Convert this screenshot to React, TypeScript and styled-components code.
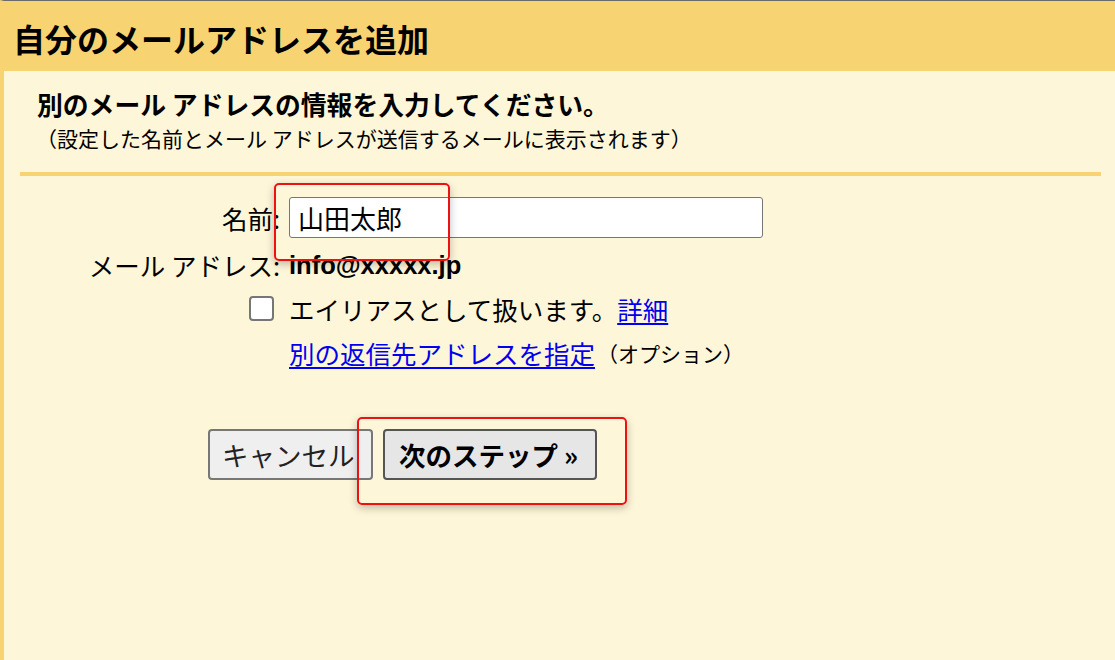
import React from 'react';
import styled, { createGlobalStyle } from 'styled-components';

const JP = `"Noto Sans CJK JP", "Noto Sans", sans-serif`;

const GlobalStyle = createGlobalStyle`
  html, body {
    margin: 0;
    padding: 0;
    background: #fef6d9;
  }
  body {
    font-family: ${JP};
    color: #000;
  }
`;

const Page = styled.div`
  position: relative;
  width: 1115px;
  height: 660px;
  overflow: hidden;
  border-top: 1px solid #6b6b6b;
  box-sizing: border-box;
  background: #fef6d9;
  border-left: 4px solid #f8d372;
`;

const Header = styled.div`
  background: #f8d372;
  height: 70px;
  margin-left: -4px;
  padding: 13px 0 0 13px;
  box-sizing: border-box;
`;

const Title = styled.h1`
  margin: 0;
  font-size: 32px;
  font-weight: 700;
  line-height: 48px;
  white-space: nowrap;
`;

const Intro = styled.div`
  padding: 18px 0 0 33px;
`;

const Lead = styled.div`
  font-size: 25.8px;
  font-weight: 700;
  line-height: 30px;
  white-space: nowrap;
`;

const Note = styled.div`
  font-size: 21px;
  line-height: 26px;
  margin: 6px 0 0 -1px;
  white-space: nowrap;
`;

const Divider = styled.hr`
  margin: 21px 0 0 16px;
  width: 1081px;
  height: 4px;
  border: 0;
  background: #f8d372;
`;

const Form = styled.div`
  display: grid;
  grid-template-columns: 276px 480px;
  column-gap: 9px;
  align-items: center;
  margin-top: 21px;
`;

const Label = styled.div<{ $mt?: number }>`
  text-align: right;
  font-size: 25.5px;
  line-height: 30px;
  white-space: nowrap;
  margin-top: ${p => p.$mt ?? 0}px;
`;

const Field = styled.input`
  box-sizing: border-box;
  width: 474px;
  height: 41px;
  border: 1px solid #767676;
  border-radius: 3px;
  background: #fff;
  font-family: ${JP};
  font-size: 26px;
  padding: 0 8px;
  color: #000;
  outline: none;
`;

const Value = styled.div`
  font-family: "Liberation Sans", Arial, sans-serif;
  font-weight: 700;
  font-size: 25.5px;
  line-height: 30px;
  margin-top: 12px;
`;

const Row = styled.div<{ $mt: number }>`
  grid-column: 2;
  margin-top: ${p => p.$mt}px;
  font-size: 25.5px;
  line-height: 30px;
  display: flex;
  align-items: center;
  position: relative;
  white-space: nowrap;
`;

const Check = styled.span`
  position: absolute;
  left: -40px;
  top: 2px;
  width: 25px;
  height: 25px;
  box-sizing: border-box;
  border: 2px solid #767676;
  border-radius: 4px;
  background: #fff;
`;

const Link = styled.a`
  color: #0000ee;
  text-decoration: underline;
  text-underline-offset: 3px;
  cursor: pointer;
`;

const Small = styled.span`
  font-size: 21px;
  margin-left: 2px;
`;

const Buttons = styled.div`
  display: flex;
  gap: 10px;
  margin: 61px 0 0 204px;
`;

const Button = styled.button<{ $primary?: boolean }>`
  height: 51px;
  box-sizing: border-box;
  border: 2px solid ${p => (p.$primary ? '#555' : '#777')};
  border-radius: 4px;
  background: ${p => (p.$primary ? '#e6e6e6' : '#efefef')};
  font-family: ${JP};
  font-size: 26.5px;
  font-weight: ${p => (p.$primary ? 700 : 400)};
  color: ${p => (p.$primary ? '#000' : '#222')};
  padding: 0 ${p => (p.$primary ? 14 : 12)}px;
  width: ${p => (p.$primary ? 214 : 165)}px;
  text-align: ${p => (p.$primary ? 'left' : 'left')};
  white-space: nowrap;
  overflow: hidden;
`;

const Highlight = styled.div`
  position: absolute;
  box-sizing: border-box;
  border: 2px solid #ee1111;
  border-radius: 5px;
  box-shadow: 0 3px 8px rgba(0, 0, 0, 0.25);
  pointer-events: none;
`;

export default function App() {
  return (
    <>
      <GlobalStyle />
      <Page>
        <Header>
          <Title>自分のメールアドレスを追加</Title>
        </Header>
        <Intro>
          <Lead>別のメール アドレスの情報を入力してください。</Lead>
          <Note>（設定した名前とメール アドレスが送信するメールに表示されます）</Note>
        </Intro>
        <Divider />
        <Form>
          <Label>名前:</Label>
          <Field defaultValue="山田太郎" />
          <Label $mt={12}>メール アドレス:</Label>
          <Value>info@xxxxx.jp</Value>
          <Row $mt={14}>
            <Check />
            エイリアスとして扱います。<Link>詳細</Link>
          </Row>
          <Row $mt={14}>
            <Link>別の返信先アドレスを指定</Link>
            <Small>（オプション）</Small>
          </Row>
        </Form>
        <Buttons>
          <Button>キャンセル</Button>
          <Button $primary>次のステップ »</Button>
        </Buttons>
        <Highlight style={{ left: 270, top: 182, width: 176, height: 78 }} />
        <Highlight style={{ left: 353, top: 416, width: 270, height: 88 }} />
      </Page>
    </>
  );
}
